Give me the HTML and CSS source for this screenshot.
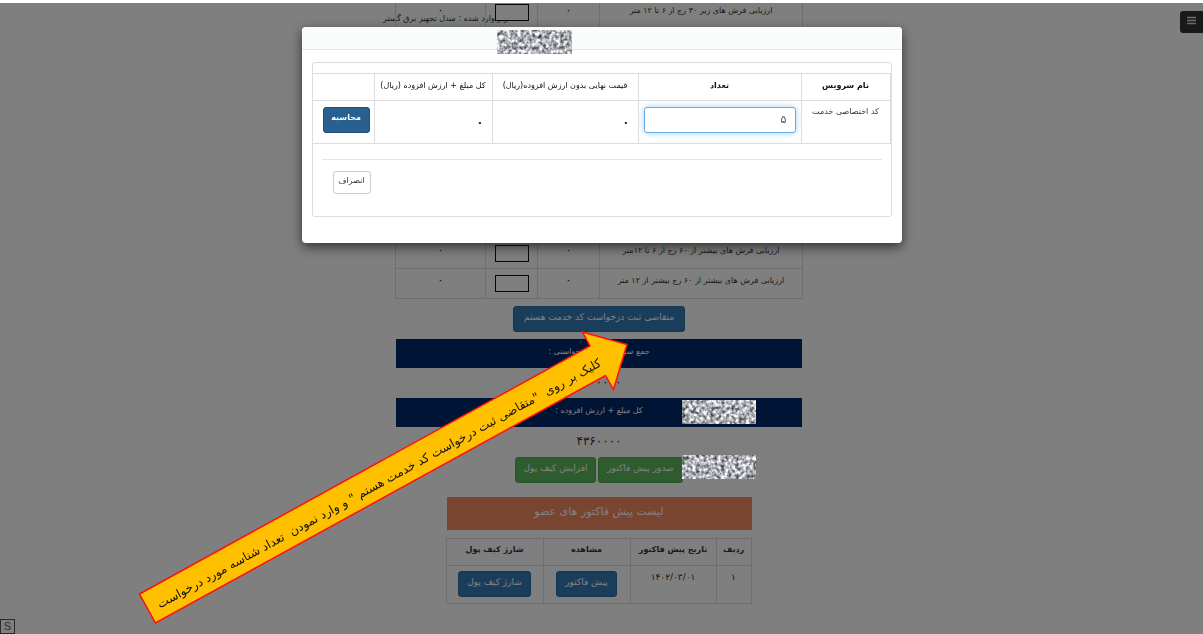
FILE: index.html
```
<!DOCTYPE html>
<html lang="fa" dir="rtl">
<head>
<meta charset="utf-8">
<title>پیش فاکتور</title>
<link rel="stylesheet" href="styles.css">
</head>
<body>
<main class="page">
  <p class="user">کاربر وارد شده : مبدل تجهیز برق گستر</p>
  <table class="services">
    <colgroup><col class="s-name"><col class="s-price"><col class="s-count"><col class="s-total"></colgroup>
    <tr class="first"><td>ارزیابی فرش های زیر ۳۰ رج از ۶ تا ۱۲ متر</td><td>۰</td><td><input aria-label="تعداد زیر ۳۰ رج"></td><td>۰</td></tr>
    <tr class="gap"><td></td><td></td><td></td><td></td></tr>
    <tr><td>ارزیابی فرش های بیشتر از ۶۰ رج از ۶ تا ۱۲متر</td><td>۰</td><td><input aria-label="تعداد ۶ تا ۱۲ متر"></td><td>۰</td></tr>
    <tr><td>ارزیابی فرش های بیشتر از ۶۰ رج بیشتر از ۱۲ متر</td><td>۰</td><td><input aria-label="تعداد بیشتر از ۱۲ متر"></td><td>۰</td></tr>
  </table>
  <button class="btn blue request">متقاضی ثبت درخواست کد خدمت هستم</button>
  <dl class="totals">
    <dt>جمع سرویس های درخواستی :</dt><dd>۴۰۰۰۰۰۰</dd>
    <dt>کل مبلغ + ارزش افروده :</dt><dd>۴۳۶۰۰۰۰</dd>
  </dl>
  <div class="actions"><button class="btn green issue">صدور پیش فاکتور</button><button class="btn green">افزایش کیف پول</button></div>
  <section class="invoices">
    <h2>لیست پیش فاکتور های عضو</h2>
    <table>
      <colgroup><col class="i-row"><col class="i-date"><col class="i-view"><col class="i-charge"></colgroup>
      <thead><tr><th>ردیف</th><th>تاریخ پیش فاکتور</th><th>مشاهده</th><th>شارژ کیف پول</th></tr></thead>
      <tbody><tr><td>۱</td><td>۱۴۰۲/۰۳/۰۱</td><td><button class="btn blue">پیش فاکتور</button></td><td><button class="btn blue">شارژ کیف پول</button></td></tr></tbody>
    </table>
  </section>
  <button class="menu" aria-label="منو"><svg width="9" height="9" viewBox="0 0 9 9"><path d="M0 1.5h9M0 4.5h9M0 7.5h9" stroke="#d8d8d8" stroke-width="1.5"/></svg></button>
  <span class="mark">S</span>
</main>
<div class="backdrop"></div>
<div class="modal" role="dialog" aria-label="کد اختصاصی خدمت">
  <header class="modal-head"></header>
  <div class="modal-body">
    <div class="panel">
      <table class="calc">
        <colgroup><col class="c-name"><col class="c-count"><col class="c-price"><col class="c-total"><col class="c-act"></colgroup>
        <thead><tr><th>نام سرویس</th><th>تعداد</th><th>قیمت نهایی بدون ارزش افزوده(ریال)</th><th>کل مبلغ + ارزش افزوده (ریال)</th><th></th></tr></thead>
        <tbody><tr><td><label for="qty">کد اختصاصی خدمت</label></td><td><input id="qty" value="۵"></td><td class="num">۰</td><td class="num">۰</td><td><button class="btn calc-btn">محاسبه</button></td></tr></tbody>
      </table>
      <hr>
      <div class="foot"><button class="cancel">انصراف</button></div>
    </div>
  </div>
</div>
<svg class="overlay" width="760" height="634" viewBox="0 0 760 634">
  <defs>
    <filter id="grain" x="0" y="0" width="100%" height="100%" color-interpolation-filters="sRGB">
      <feTurbulence type="fractalNoise" baseFrequency="0.28" numOctaves="2" seed="4"/>
      <feColorMatrix values="1.5 0 0 0 -0.07  1.5 0 0 0 -0.06  1.5 0 0 0 -0.04  0 0 0 0 1"/>
    </filter>
  </defs>
  <rect x="497" y="30" width="75" height="24" filter="url(#grain)"/>
  <rect x="682" y="400" width="74" height="24" filter="url(#grain)"/>
  <rect x="682" y="455" width="74" height="24" filter="url(#grain)"/>
  <path d="M139.500 594L590 346L582.500 332L627 344.500L613.500 389.500L605.500 375.500L155.500 623Z" fill="#ffc000" stroke="#ff1010" stroke-width="1.500"/>
  <text class="note" x="381" y="487" transform="rotate(-28.800 381 487)" text-anchor="middle" direction="rtl">کلیک بر روی &nbsp;"متقاضی ثبت درخواست کد خدمت هستم&nbsp;" و وارد نمودن &nbsp;تعداد شناسه مورد درخواست</text>
</svg>
</body>
</html>
```
FILE: styles.css
```
* { box-sizing: border-box; }
body {
  margin: 0;
  min-height: 100vh;
  border-top: 3px solid #fff;
  background: #fff;
  color: #333;
  font: 9px/14px "DejaVu Sans", sans-serif;
  overflow: hidden;
}
table { border-collapse: collapse; table-layout: fixed; width: 100%; }
td, th { border: 1px solid #ddd; padding: 0; text-align: center; white-space: nowrap; }
button, input { font: inherit; }
.page {
  display: flex;
  flex-direction: column;
  align-items: center;
  padding-right: 5px;
  direction: ltr;
}
.page > * { direction: rtl; }
.user { position: absolute; z-index: 0; left: 383px; top: 12px; margin: 0; font-size: 8px; white-space: nowrap; }
.services { position: relative; z-index: 1; width: 407px; font-size: 8px; }
.services tr { height: 30px; }
.services td { padding-bottom: 5px; }
.services td:nth-child(3) { padding-bottom: 0; }
.services .first { height: 24px; }
.services .first td { border-top: 0; padding-top: 1px; vertical-align: top; }
.services .gap { height: 211px; }
.services input {
  display: block;
  width: 34px;
  height: 17px;
  margin: 0 auto;
  border: 1px solid #111;
  background: #fff;
}
.services td:not(:first-child) { font-weight: bold; }
.s-name { width: 203px; }
.s-price { width: 62px; }
.s-count { width: 52px; }
.s-total { width: 90px; }
.btn {
  height: 26px;
  padding: 0 8px 4px;
  border: 1px solid transparent;
  border-radius: 3px;
  color: #fff;
  white-space: nowrap;
}
.blue { background: #337ab7; border-color: #2e6da4; }
.green { background: #5cb85c; border-color: #4cae4c; }
.request { margin-top: 7px; width: 172px; padding: 0 0 4px; }
.totals { width: 406px; margin: 7px 0 0; text-align: center; }
.totals dt { height: 29px; padding-top: 6px; background: #00286a; color: #fff; font-size: 8px; }
.totals dd { height: 30px; margin: 0; padding-top: 7px; font-size: 12px; background: #fcfcfc; }
.actions { display: flex; gap: 2px; }
.actions .btn { width: 81px; padding: 0 0 4px; }
.actions .issue { width: 85px; }
.invoices { width: 305px; margin-top: 14px; }
.invoices h2 {
  height: 33px;
  margin: 0 0 8px;
  padding-top: 8px;
  background: #f48a60;
  color: #fff;
  text-align: center;
  font-size: 11px;
  font-weight: normal;
}
.invoices th { height: 27px; padding-bottom: 3px; font-size: 8px; }
.invoices td { height: 38px; }
.invoices td:nth-child(-n+2) { padding-top: 4px; vertical-align: top; }
.i-row { width: 35px; }
.i-date { width: 86px; }
.i-view { width: 87px; }
.i-charge { width: 97px; }
.menu {
  position: absolute;
  top: 11px;
  right: 0;
  width: 23px;
  height: 22px;
  padding: 0;
  border: 0;
  border-radius: 3px 0 0 3px;
  background: #333;
}
.mark {
  position: absolute;
  bottom: 0;
  left: 0;
  width: 15px;
  height: 15px;
  border: 1px solid #555;
  color: #555;
  font: 11px/13px "Liberation Sans", sans-serif;
  text-align: center;
}
.backdrop { position: fixed; z-index: 2; inset: 3px 0 0; background: rgba(0, 0, 0, .5); }
.modal {
  position: absolute;
  z-index: 3;
  top: 27px;
  left: 50%;
  width: 600px;
  margin-left: -300px;
  border-radius: 4px;
  background: #fff;
  box-shadow: 0 4px 12px rgba(0, 0, 0, .6);
}
.modal-head { height: 23px; border-bottom: 1px solid #e5e5e5; border-radius: 4px 4px 0 0; background: #fafcfb; }
.modal-body { padding: 12px 10px 26px; }
.panel { padding: 10px 0 22px; border: 1px solid #ddd; border-radius: 3px; }
.calc th { height: 27px; padding-bottom: 2px; color: #111; font-size: 8px; font-weight: normal; }
.calc th:first-child, .calc th:nth-child(2) { font-weight: bold; }
.calc td { height: 43px; }
.calc td:first-child { padding-top: 4px; vertical-align: top; font-size: 8px; }
.calc td:nth-child(2) { padding: 0 5px 4px; }
.calc td:last-child { padding: 0 0 4px 6px; }
.calc td:last-child { padding: 0 0 4px 6px; }
.calc td.num { padding: 0 8px; text-align: right; direction: ltr; font-size: 12px; font-weight: bold; }
.c-name { width: 89px; }
.c-count { width: 163px; }
.c-price { width: 146px; }
.c-total { width: 118px; }
.c-act { width: 62px; }
#qty {
  display: block;
  width: 100%;
  height: 26px;
  padding: 0 8px 2px;
  border: 1px solid #66afe9;
  border-radius: 3px;
  color: #555;
  font-size: 11px;
  outline: 0;
  box-shadow: 0 0 6px rgba(102, 175, 233, .6);
}
.calc-btn { width: 47px; padding: 0 0 4px; border-color: #204d74; background: #286090; font-size: 8px; font-weight: bold; }
hr { margin: 15px 9px 11px; border: 0; border-top: 1px solid #e5e5e5; }
.foot { display: flex; justify-content: flex-end; padding-left: 20px; }
.cancel { width: 38px; height: 23px; padding: 0 0 3px; border: 1px solid #ccc; border-radius: 3px; background: #fff; color: #333; font-size: 8px; }
.overlay { position: absolute; z-index: 4; top: 0; left: 0; pointer-events: none; }
.note { font-family: "DejaVu Sans", sans-serif; font-size: 12px; fill: #111; }
```
